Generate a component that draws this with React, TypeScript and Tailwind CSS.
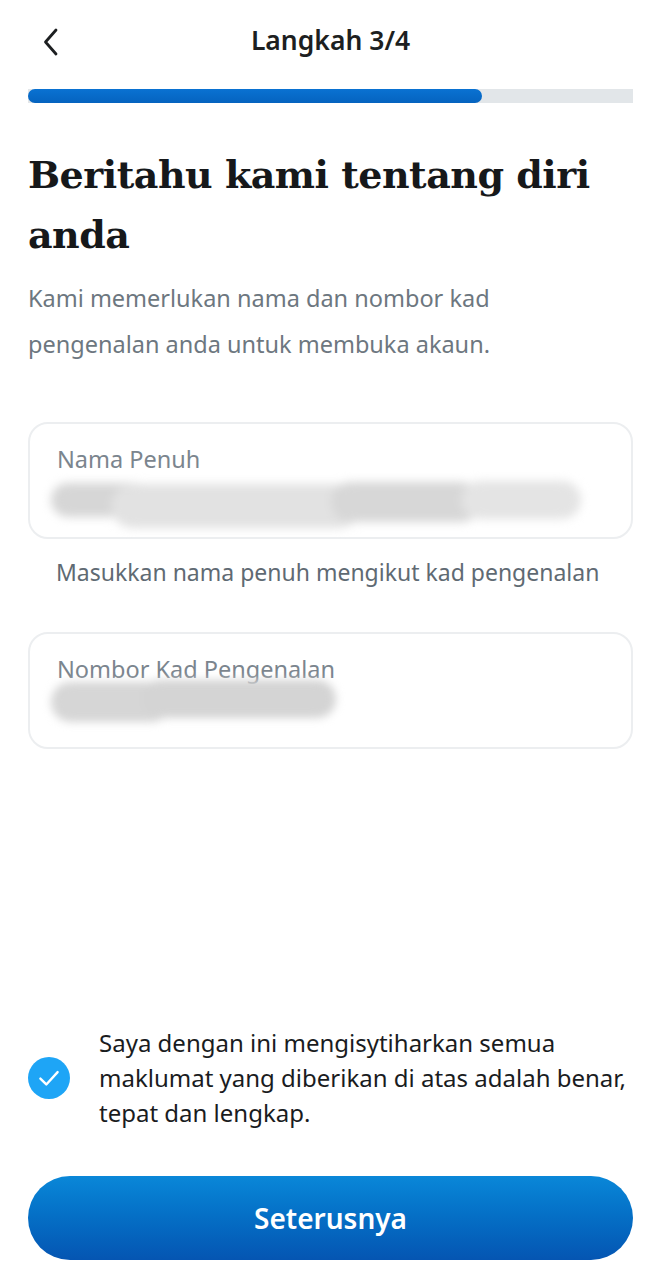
import React, { useState } from 'react';

const sans = "font-['Noto_Sans',_'Open_Sans',_sans-serif]";

function Field({ label, children }: { label: string; children: React.ReactNode }) {
  return (
    <div className="h-[117px] rounded-[20px] border-2 border-[#eceef0] bg-white px-[27px] pt-[20px]">
      <div className="text-[23.5px] leading-[30px] text-[#7b858e]">{label}</div>
      <div>{children}</div>
    </div>
  );
}

export default function App() {
  const [agreed, setAgreed] = useState(true);

  return (
    <div className={`h-[1280px] w-[661px] bg-white flex flex-col ${sans}`}>
      {/* Header */}
      <div className="relative flex h-[82px] items-center justify-center">
        <button className="absolute left-[35px] top-[22px] p-1 text-[#1d1f21]">
          <svg width="24" height="32" viewBox="0 0 24 32" fill="none">
            <path d="M17 4 L6.5 16 L17 28" stroke="currentColor" strokeWidth="2.8" strokeLinecap="round" strokeLinejoin="round" />
          </svg>
        </button>
        <h1 className="text-[26.5px] font-semibold text-[#1d1f21]">Langkah 3/4</h1>
      </div>

      {/* Progress */}
      <div className="mx-[28px] mt-[7px] h-[14px] bg-[#e2e6e9]">
        <div className="h-full w-[454px] rounded-full bg-gradient-to-b from-[#0a72d2] to-[#0563bf]" />
      </div>

      <div className="px-[28px]">
        <h2 className="mt-[42px] font-['DejaVu_Serif',_serif] text-[38px] font-bold leading-[60px] tracking-[-0.5px] text-[#16181a]">
          Beritahu kami tentang diri anda
        </h2>
        <p className="mt-[10px] text-[23.5px] leading-[46px] text-[#6d7780]">
          Kami memerlukan nama dan nombor kad
          <br />
          pengenalan anda untuk membuka akaun.
        </p>

        <div className="mt-[55px]">
          <Field label="Nama Penuh">
            <div className="flex items-center blur-[5px] -ml-[6px] -mt-[2px]">
              <div className="h-[34px] w-[100px] rounded-full bg-[#d6d6d6]" />
              <div className="-ml-[40px] mt-[12px] h-[44px] w-[250px] rounded-full bg-[#e2e2e2]" />
              <div className="-ml-[30px] mt-[4px] h-[40px] w-[150px] rounded-full bg-[#d7d7d7]" />
              <div className="-ml-[20px] h-[38px] w-[120px] rounded-full bg-[#e4e4e4]" />
            </div>
          </Field>
          <div className="mt-[18px] px-[28px] text-[23px] leading-[30px] text-[#5f6a73]">
            Masukkan nama penuh mengikut kad pengenalan
          </div>
        </div>

        <div className="mt-[45px]">
          <Field label="Nombor Kad Pengenalan">
            <div className="flex items-center blur-[4px] -ml-[6px] -mt-[2px]">
              <div className="h-[40px] w-[120px] rounded-full bg-[#d6d6d6]" />
              <div className="-ml-[30px] -mt-[6px] h-[38px] w-[195px] rounded-full bg-[#d4d4d4]" />
            </div>
          </Field>
        </div>
      </div>

      <div className="flex-1" />

      {/* Declaration */}
      <div className="flex items-center gap-[29px] px-[28px]">
        <button
          onClick={() => setAgreed((v) => !v)}
          className={`flex h-[42px] w-[42px] shrink-0 items-center justify-center rounded-full ${agreed ? 'bg-[#1ea5f6]' : 'border-2 border-[#c4cbd1] bg-white'}`}
        >
          {agreed && (
            <svg width="28" height="28" viewBox="0 0 26 26" fill="none">
              <path d="M5 13.5 L10.5 19 L21 7.5" stroke="white" strokeWidth="2.2" strokeLinecap="round" strokeLinejoin="round" />
            </svg>
          )}
        </button>
        <p className="text-[24px] leading-[35px] text-[#1a1c1e]">
          Saya dengan ini mengisytiharkan semua maklumat yang diberikan di atas adalah benar, tepat dan lengkap.
        </p>
      </div>

      {/* Button */}
      <div className="px-[28px] pt-[46px] pb-[20px]">
        <button className="h-[84px] w-full rounded-full bg-gradient-to-b from-[#0a87d8] to-[#0555b2] text-[28px] font-semibold text-white">
          Seterusnya
        </button>
      </div>
    </div>
  );
}
